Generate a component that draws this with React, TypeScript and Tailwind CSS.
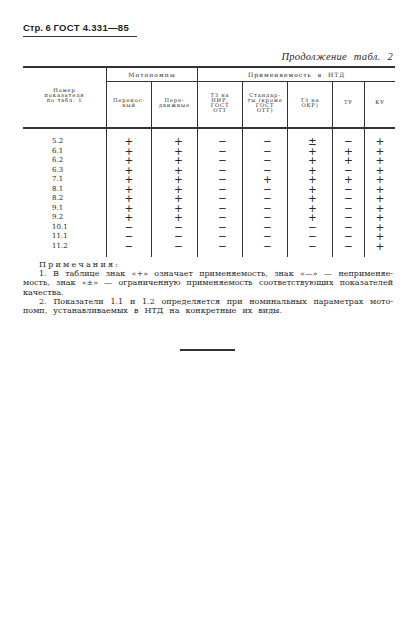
const rows: string[][] = [
  ["5.2", "+", "+", "−", "−", "±", "−", "+"],
  ["6.1", "+", "+", "−", "−", "+", "+", "+"],
  ["6.2", "+", "+", "−", "−", "+", "+", "+"],
  ["6.3", "+", "+", "−", "−", "+", "−", "+"],
  ["7.1", "+", "+", "−", "+", "+", "+", "+"],
  ["8.1", "+", "+", "−", "−", "+", "−", "+"],
  ["8.2", "+", "+", "−", "−", "+", "−", "+"],
  ["9.1", "+", "+", "−", "−", "+", "−", "+"],
  ["9.2", "+", "+", "−", "−", "+", "−", "+"],
  ["10.1", "−", "−", "−", "−", "−", "−", "+"],
  ["11.1", "−", "−", "−", "−", "−", "−", "+"],
  ["11.2", "−", "−", "−", "−", "−", "−", "+"],
]

// symbol columns: border + small nudge to sit where the scan has them
const symbolCols = [
  "border-r border-[#333] pl-0",
  "border-r border-[#333] pl-[8px]",
  "border-r border-[#333] pl-[5px]",
  "border-r border-[#333] pl-[5px]",
  "border-r border-[#333] pl-[5px]",
  "border-r border-[#333] pl-0",
  "pl-0",
]

const serif = "font-['DejaVu_Serif',serif]"
const head = "font-['DejaVu_Serif',serif] text-[5.2px] leading-[5px] tracking-[0.85px] text-center"

function HeadCell({ lines, last }: { lines: string[]; last?: boolean }) {
  return (
    <div className={`flex items-center justify-center pb-[4px] ${last ? "" : "border-r border-[#333]"}`}>
      <div className={head}>
        {lines.map((l, i) => (
          <div key={i}>{l}</div>
        ))}
      </div>
    </div>
  )
}

export default function App() {
  return (
    <div className="w-[419px] h-[639px] bg-white text-[#1f1f1f] pl-[23px] pt-[22px]">
      {/* page header */}
      <div className="w-[114px] border-b border-[#333] pb-[3px] font-['Liberation_Sans',sans-serif] text-[9.5px] leading-[11px] whitespace-nowrap">
        <span className="font-semibold">Стр. 6 </span>
        <span className="font-bold tracking-[0.3px]">ГОСТ 4.331—85</span>
      </div>

      <div className="w-[370px] mt-[14px] text-right italic font-['Liberation_Serif',serif] text-[10.5px] leading-[12px] [word-spacing:4px] tracking-[0.3px]">
        Продолжение табл. 2
      </div>

      {/* table */}
      <div className="w-[372px] mt-[3px] border-t-2 border-[#333]">
        <div className="grid grid-cols-[84px_45px_46px_45px_45px_45px_32px_30px] grid-rows-[14px_45px] border-b-2 border-[#333]">
          <div className="row-span-2 flex items-center justify-center pb-[4px] border-r border-[#333]">
            <div className={head}>
              <div>Номер</div>
              <div>показателя</div>
              <div>по табл. 1</div>
            </div>
          </div>
          <div className={`col-span-2 flex items-center justify-center border-r border-b border-[#333] ${serif} text-[6px] leading-[6px] tracking-[1.1px]`}>
            Мотопомпы
          </div>
          <div className={`col-span-5 flex items-center justify-center border-b border-[#333] ${serif} text-[6px] leading-[6px] tracking-[1px] [word-spacing:3px]`}>
            Применяемость в НТД
          </div>
          <HeadCell lines={["Перенос-", "ный"]} />
          <HeadCell lines={["Пере-", "движные"]} />
          <HeadCell lines={["ТЗ на", "НИР,", "ГОСТ", "ОТТ"]} />
          <HeadCell lines={["Стандар-", "ты (кроме", "ГОСТ", "ОТТ)"]} />
          <HeadCell lines={["ТЗ на", "ОКР)"]} />
          <HeadCell lines={["ТУ"]} />
          <HeadCell lines={["КУ"]} last />
        </div>

        <div className="grid grid-cols-[84px_45px_46px_45px_45px_45px_32px_30px]">
          <div className={`border-r border-[#333] pt-[8px] pb-[6px] pl-[29px] ${serif} text-[7px] leading-[9.5px]`}>
            {rows.map((r) => (
              <div key={r[0]} className="h-[9.5px]">{r[0]}</div>
            ))}
          </div>
          {symbolCols.map((cls, c) => (
            <div key={c} className={`${cls} pt-[8px] pb-[6px] font-['DejaVu_Sans',sans-serif] text-[10.5px] leading-[9.5px] text-center text-[#2a2a2a]`}>
              {rows.map((r) => (
                <div key={r[0]} className="h-[9.5px]">{r[c + 1]}</div>
              ))}
            </div>
          ))}
        </div>
      </div>

      {/* notes */}
      <div className={`w-[370px] mt-[3px] ${serif} text-[8px] leading-[9.2px] whitespace-nowrap`}>
        <div className="pl-[16px] tracking-[2.2px]">Примечания:</div>
        <div className="pl-[16px] text-justify [text-align-last:justify]">
          1. В таблице знак «+» означает применяемость, знак «—» — неприменяе-
        </div>
        <div className="text-justify [text-align-last:justify]">
          мость, знак «±» — ограниченную применяемость соответствующих показателей
        </div>
        <div>качества.</div>
        <div className="pl-[16px] text-justify [text-align-last:justify]">
          2. Показатели 1.1 и 1.2 определяется при номинальных параметрах мото-
        </div>
        <div className="w-[259px] text-justify [text-align-last:justify]">
          помп, устанавливаемых в НТД на конкретные их виды.
        </div>
      </div>

      <div className="ml-[157px] mt-[34px] w-[55px] border-t-2 border-[#333]" />
    </div>
  )
}
